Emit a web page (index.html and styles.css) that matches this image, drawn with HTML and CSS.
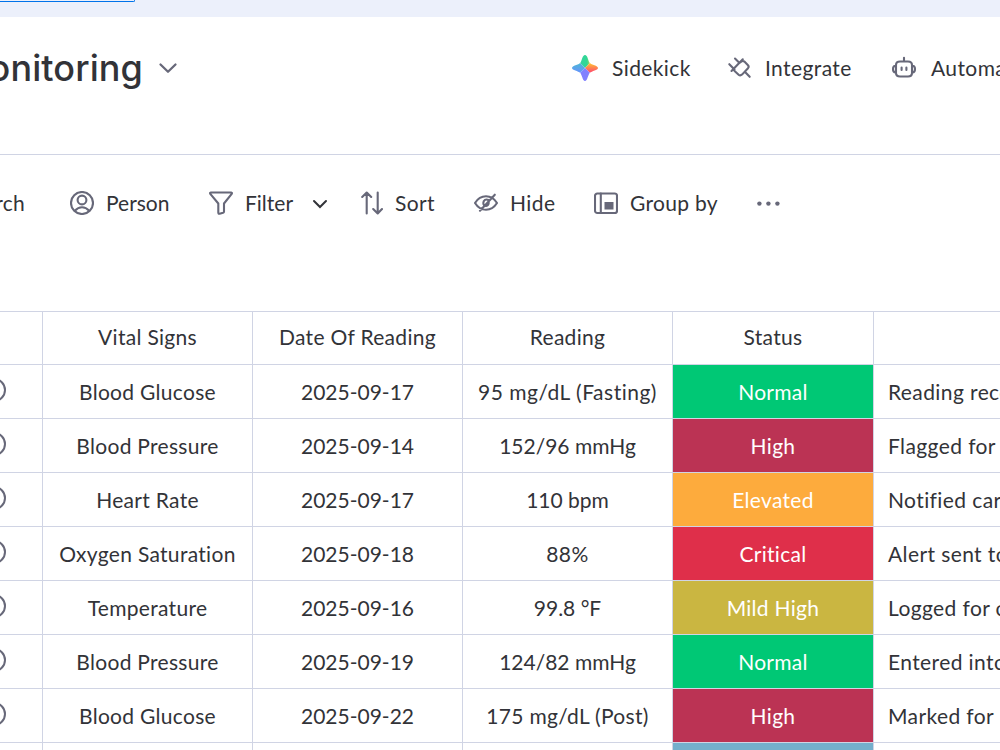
FILE: index.html
```html
<!DOCTYPE html>
<html lang="en">
<head>
    <meta charset="UTF-8">
    <meta name="viewport" content="width=device-width, initial-scale=1.0">
    <title>Monitoring</title>
    <link rel="stylesheet" href="styles.css">
</head>
<body>

    <div class="top-strip"><div class="strip-tab"></div></div>

    <header class="board-header">
        <h1 class="board-title"><span>onitoring</span></h1>
        <svg class="title-arrow" width="20" height="14" viewBox="0 0 20 14"><path d="M2.5 3.5 L10 10.8 L17.5 3.5"/></svg>
        <div class="header-actions">
            <div class="action sidekick">
                <svg width="28" height="28" viewBox="0 0 28 28">
                    <defs>
                        <clipPath id="star"><path d="M14 1 C16.6 1 17 6.5 18.6 8.7 C20.5 10.8 27 11.6 27 14 C27 16.4 20.8 17 18.8 18.8 C17 20.8 16.4 27 14 27 C11.6 27 11 20.8 9.2 18.8 C7.2 17 1 16.4 1 14 C1 11.6 7.5 10.8 9.4 8.7 C11 6.5 11.4 1 14 1Z"/></clipPath>
                        <linearGradient id="top" x1="0" y1="0" x2="1" y2="0">
                            <stop offset="0.3" stop-color="#35d39f"/>
                            <stop offset="0.6" stop-color="#30d894"/>
                            <stop offset="0.75" stop-color="#b6d652"/>
                        </linearGradient>
                        <linearGradient id="right" x1="0" y1="0" x2="0" y2="1">
                            <stop offset="0.25" stop-color="#ffcb2e"/>
                            <stop offset="0.45" stop-color="#ff8d4b"/>
                            <stop offset="0.7" stop-color="#ff4f6b"/>
                        </linearGradient>
                        <linearGradient id="left" x1="0" y1="0" x2="0" y2="1">
                            <stop offset="0.3" stop-color="#4fb4d8"/>
                            <stop offset="0.7" stop-color="#6595fb"/>
                        </linearGradient>
                    </defs>
                    <g clip-path="url(#star)">
                        <path d="M14 14 L4 4 V0 H24 V4Z" fill="url(#top)"/>
                        <path d="M14 14 L24 4 L28 8 V22 L24 24Z" fill="url(#right)"/>
                        <path d="M14 14 L24 24 V28 H4 V24Z" fill="#8181ff"/>
                        <path d="M14 14 L4 24 L0 20 V4 H4Z" fill="url(#left)"/>
                    </g>
                </svg>
                <span>Sidekick</span>
            </div>
            <div class="action integrate">
                <svg width="26" height="26" viewBox="0 0 26 26" class="icon">
                    <path d="M8 3.5 L11.5 7 M2.3 9.2 L7.5 14.4 M15.8 4.3 L4.5 16 M12.2 8 L15 6.2 Q16.3 5.6 17.4 6.6 L21 10.2 Q22.3 11.6 21 13.2 L15 19.6 Q13.3 21.2 11.6 19.7 L7.6 16 Q6.5 14.8 7.4 13.4 M18.3 17.2 L22.7 21.8"/>
                </svg>
                <span>Integrate</span>
            </div>
            <div class="action automate">
                <svg width="26" height="26" viewBox="0 0 26 26" class="icon">
                    <path d="M13 2.8 V6.5 M9 6.5 H17 Q21 6.5 21 10 V18 Q21 21.5 17 21.5 H9 Q5 21.5 5 18 V10 Q5 6.5 9 6.5Z M5 10.8 H4.5 Q2 11 2 14 Q2 17.3 4.5 17.5 H5 M21 10.8 H21.5 Q24 11 24 14 Q24 17.3 21.5 17.5 H21 M10.6 12.5 V15 M15.4 12.5 V15"/>
                </svg>
                <span>Automate</span>
            </div>
        </div>
    </header>

    <nav class="toolbar">
        <div class="tool search"><span>Search</span></div>
        <div class="tool person">
            <svg width="24" height="24" viewBox="0 0 24 24" class="icon"><circle cx="12" cy="12" r="11"/><circle cx="12" cy="9" r="4.4"/><path d="M4.8 19.8 Q8 16.2 12 16.2 Q16 16.2 19.2 19.8"/></svg>
            <span>Person</span>
        </div>
        <div class="tool filter">
            <svg width="24" height="24" viewBox="0 0 24 24" class="icon"><path d="M1.8 1.5 H22.2 Q23.4 1.7 22.7 2.9 L15 12.5 V20.5 Q15 21.4 14.1 21.7 L10.6 22.7 Q9.3 23 9.3 21.6 V12.5 L1.3 2.9 Q.6 1.7 1.8 1.5Z"/></svg>
            <span>Filter</span>
            <svg class="filter-arrow" width="16" height="12" viewBox="0 0 16 12"><path d="M2 4 L8 10 L14 4"/></svg>
        </div>
        <div class="tool sort">
            <svg width="22" height="24" viewBox="0 0 22 24" class="icon"><path d="M5.7 22.5 V1.8 M1.2 6 L5.7 1.5 L10.2 6 M16.7 1.5 V22.2 M12.2 18 L16.7 22.5 L21 18"/></svg>
            <span>Sort</span>
        </div>
        <div class="tool hide">
            <svg width="24" height="24" viewBox="0 0 24 24" class="icon"><path d="M1 12 Q5.2 5.3 12 5.3 Q18.8 5.3 23 12 Q18.8 18.7 12 18.7 Q5.2 18.7 1 12Z M20.8 3.7 L6 19.7 M14.3 9 C12 7.6 9.3 9.2 9.3 12 Q9.3 13.6 10.3 14.6 M14.7 11.5 Q14.8 14.4 12 15"/></svg>
            <span>Hide</span>
        </div>
        <div class="tool group">
            <svg width="24" height="24" viewBox="0 0 24 24" class="icon"><rect x="1" y="2.5" width="22" height="19.5" rx="2.3"/><path d="M6.8 2.5 V22"/><rect class="solid" x="10.5" y="11" width="9" height="7.5"/></svg>
            <span>Group by</span>
        </div>
        <svg class="dots" width="24" height="6" viewBox="0 0 24 6"><circle cx="3.4" cy="3.6" r="2.2"/><circle cx="12.4" cy="3.6" r="2.2"/><circle cx="21.4" cy="3.6" r="2.2"/></svg>
    </nav>

    <div class="board">
        <div class="row head">
            <div class="cell chat"></div>
            <div class="cell">Vital Signs</div>
            <div class="cell">Date Of Reading</div>
            <div class="cell">Reading</div>
            <div class="cell">Status</div>
            <div class="cell notes"></div>
        </div>
        <div class="row">
            <div class="cell chat"><i class="bubble"></i></div>
            <div class="cell">Blood Glucose</div>
            <div class="cell date">2025-09-17</div>
            <div class="cell reading wide">95 mg/dL (Fasting)</div>
            <div class="cell status normal">Normal</div>
            <div class="cell notes">Reading recorded</div>
        </div>
        <div class="row">
            <div class="cell chat"><i class="bubble"></i></div>
            <div class="cell">Blood Pressure</div>
            <div class="cell date">2025-09-14</div>
            <div class="cell reading">152/96 mmHg</div>
            <div class="cell status high">High</div>
            <div class="cell notes">Flagged for review</div>
        </div>
        <div class="row">
            <div class="cell chat"><i class="bubble"></i></div>
            <div class="cell">Heart Rate</div>
            <div class="cell date">2025-09-17</div>
            <div class="cell reading">110 bpm</div>
            <div class="cell status elevated">Elevated</div>
            <div class="cell notes">Notified care team</div>
        </div>
        <div class="row">
            <div class="cell chat"><i class="bubble"></i></div>
            <div class="cell">Oxygen Saturation</div>
            <div class="cell date">2025-09-18</div>
            <div class="cell wide">88%</div>
            <div class="cell status critical">Critical</div>
            <div class="cell notes">Alert sent to doctor</div>
        </div>
        <div class="row">
            <div class="cell chat"><i class="bubble"></i></div>
            <div class="cell">Temperature</div>
            <div class="cell date">2025-09-16</div>
            <div class="cell reading">99.8 °F</div>
            <div class="cell status mild">Mild High</div>
            <div class="cell notes">Logged for observation</div>
        </div>
        <div class="row">
            <div class="cell chat"><i class="bubble"></i></div>
            <div class="cell">Blood Pressure</div>
            <div class="cell date">2025-09-19</div>
            <div class="cell reading">124/82 mmHg</div>
            <div class="cell status normal">Normal</div>
            <div class="cell notes">Entered into chart</div>
        </div>
        <div class="row">
            <div class="cell chat"><i class="bubble"></i></div>
            <div class="cell">Blood Glucose</div>
            <div class="cell date">2025-09-22</div>
            <div class="cell">175 mg/dL (Post)</div>
            <div class="cell status high">High</div>
            <div class="cell notes">Marked for physician</div>
        </div>
        <div class="row last">
            <div class="cell chat"></div>
            <div class="cell"></div>
            <div class="cell"></div>
            <div class="cell"></div>
            <div class="cell status low"></div>
            <div class="cell notes"></div>
        </div>
    </div>

</body>
</html>
```
FILE: styles.css
```css
* {
    box-sizing: border-box;
}
body {
    margin: 0;
    height: 750px;
    overflow: hidden;
    background: #fff;
    color: #323338;
    font-family: Lato, sans-serif;
    font-size: 21px;
    letter-spacing: 0.3px;
    white-space: nowrap;
}
svg {
    flex: none;
    fill: none;
}
.icon {
    stroke: #676879;
    stroke-width: 2.1;
    stroke-linecap: round;
    stroke-linejoin: round;
}
.solid {
    fill: #676879;
    stroke: none;
}

/* header */
.top-strip {
    height: 17px;
    background: #ecf0fb;
}
.strip-tab {
    width: 135px;
    height: 2px;
    border-bottom: 1px solid #0073ea;
    border-right: 1px solid #0073ea;
    border-bottom-right-radius: 3px;
}
.board-header {
    display: flex;
    align-items: center;
    height: 138px;
    padding-bottom: 35px;
    border-bottom: 1px solid #d0d4e4;
}
.board-title {
    display: flex;
    justify-content: flex-end;
    width: 143px;
    margin: 0;
    font-family: Inter, sans-serif;
    font-size: 36px;
    font-weight: 500;
    letter-spacing: 0.1px;
}
.title-arrow {
    margin-left: 15px;
    stroke: #676879;
    stroke-width: 2.3;
    stroke-linecap: round;
    stroke-linejoin: round;
}
.header-actions {
    display: flex;
    margin-left: 393px;
}
.action {
    display: flex;
    align-items: center;
    flex: none;
    letter-spacing: 0.4px;
}
.action span,
.tool span {
    padding-bottom: 2px;
}
.sidekick {
    width: 156px;
    gap: 13px;
}
.integrate {
    width: 164px;
    gap: 12px;
}
.automate {
    gap: 14px;
}

/* toolbar */
.toolbar {
    display: flex;
    align-items: center;
    height: 96px;
}
.tool {
    display: flex;
    align-items: center;
    gap: 12px;
    flex: none;
}
.search {
    justify-content: flex-end;
    width: 25px;
    margin-right: 45px;
}
.person {
    width: 139px;
    letter-spacing: 0;
}
.filter {
    width: 152px;
    letter-spacing: 0;
}
.filter-arrow {
    margin-left: 7px;
    stroke: #323338;
    stroke-width: 2;
    stroke-linecap: round;
}
.sort {
    width: 113px;
    letter-spacing: 0.4px;
}
.hide {
    width: 120px;
    letter-spacing: 0.4px;
}
.group {
    width: 162px;
}
.dots {
    fill: #676879;
}

/* table */
.board {
    margin-top: 60px;
}
.row {
    display: grid;
    grid-template-columns: 43px 210px 210px 210px 201px 1fr;
    height: 54px;
    border-top: 1px solid #d0d4e4;
}
.head {
    height: 53px;
}
.last {
    height: 8px;
}
.cell {
    display: flex;
    align-items: center;
    justify-content: center;
    overflow: hidden;
    padding-bottom: 1px;
    border-right: 1px solid #d0d4e4;
}
.head .cell {
    padding-bottom: 4px;
}
.date {
    letter-spacing: 0;
}
.reading {
    letter-spacing: 0;
}
.wide {
    letter-spacing: 0.5px;
}
.notes {
    justify-content: flex-start;
    padding-left: 14px;
    border-right: none;
    letter-spacing: 0.4px;
}
.chat {
    justify-content: flex-start;
}
.bubble {
    flex: none;
    width: 24px;
    height: 24px;
    margin: -2px 0 0 -18px;
    border: 2px solid #676879;
    border-radius: 50%;
}
.status {
    color: #fff;
}
.normal {
    background: #00c875;
}
.high {
    background: #bb3354;
}
.elevated {
    background: #fdab3d;
}
.critical {
    background: #df2f4a;
}
.mild {
    background: #cab641;
}
.low {
    background: #74afcc;
}
```
